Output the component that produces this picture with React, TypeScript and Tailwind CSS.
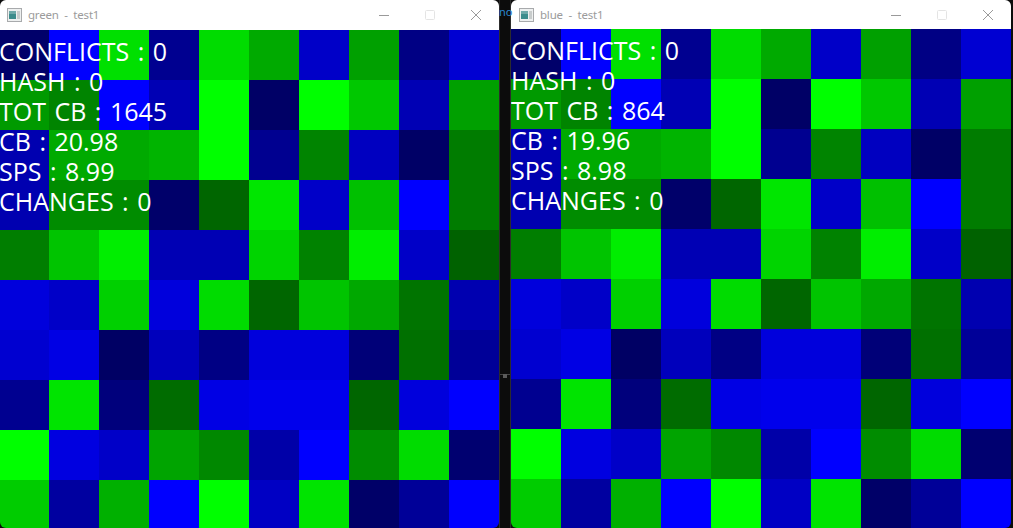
const G = (v: string) => `#00${v}00`;
const B = (v: string) => `#0000${v}`;

const cells = [
  [B('6a'), B('ff'), G('e0'), B('90'), G('dc'), G('aa'), B('c8'), G('a0'), B('84'), B('d2')],
  [G('9a'), G('84'), B('ff'), B('b4'), G('ff'), B('66'), G('ff'), G('c8'), B('b4'), G('a0')],
  [B('b0'), G('aa'), G('aa'), G('b4'), G('ff'), B('90'), G('84'), B('c0'), B('66'), G('7c')],
  [B('b0'), G('8c'), G('8c'), B('6a'), G('66'), G('e6'), B('c8'), G('c0'), B('ff'), G('7c')],
  [G('7e'), G('c4'), G('ee'), B('b4'), B('b4'), G('d4'), G('82'), G('ee'), B('c8'), G('62')],
  [B('dc'), B('c8'), G('d0'), B('dc'), G('dc'), G('66'), G('c4'), G('a8'), G('74'), B('b0')],
  [B('d0'), B('e4'), B('64'), B('bc'), B('84'), B('dc'), B('dc'), B('78'), G('70'), B('98')],
  [B('90'), G('e4'), B('7c'), G('6c'), B('e4'), B('ec'), B('ec'), G('66'), B('dc'), B('ff')],
  [G('ff'), B('e0'), B('c8'), G('a4'), G('88'), B('a8'), B('ff'), G('8c'), G('dc'), B('70')],
  [G('cc'), B('a0'), G('b0'), B('ff'), G('ff'), B('c4'), G('e4'), B('68'), B('98'), B('ff')],
];

function AppIcon() {
  return (
    <svg width="15" height="14" viewBox="0 0 15 14" className="shrink-0">
      <rect x="0.5" y="0.5" width="14" height="13" fill="#eef0f0" stroke="#a8aaac" />
      <rect x="2" y="3" width="7" height="8" fill="#3c8c8c" />
      <rect x="2" y="3" width="7" height="3" fill="#6fa9a9" />
      <rect x="10" y="3" width="3" height="8" fill="#c8cccc" />
    </svg>
  );
}

function TitleBar({ title, className, ctrl }: { title: string; className: string; ctrl: string }) {
  return (
    <div className={className}>
      <div className="flex items-center gap-[6px] text-[11.5px] tracking-[-0.2px] text-[#9b9b9b]">
        <AppIcon />
        <span className="whitespace-pre">{title}</span>
      </div>
      <div className={ctrl}>
        <svg width="10" height="10" viewBox="0 0 10 10">
          <path d="M0 5.5h10" stroke="#9a9a9a" fill="none" />
        </svg>
        <svg width="10" height="10" viewBox="0 0 10 10">
          <rect x="0.5" y="0.5" width="9" height="9" rx="1" stroke="#e4e4e4" fill="none" />
        </svg>
        <svg width="10" height="10" viewBox="0 0 10 10">
          <path d="M0 0l10 10M10 0l-10 10" stroke="#9a9a9a" fill="none" />
        </svg>
      </div>
    </div>
  );
}

function Board({ stats, className }: { stats: string[]; className: string }) {
  return (
    <div className={className}>
      <div className="grid grid-cols-[repeat(10,50px)] auto-rows-[50px] w-[500px]">
        {cells.flat().map((c, i) => (
          <div key={i} style={{ backgroundColor: c }} />
        ))}
      </div>
      <div className="absolute left-0 top-[6px] text-[25px] [word-spacing:2px] text-white font-['Open_Sans',sans-serif]">
        {stats.map((s) => (
          <div key={s} className="h-[30px] leading-[30px] whitespace-pre">
            {s}
          </div>
        ))}
      </div>
    </div>
  );
}

export default function App() {
  return (
    <div className="w-[1013px] h-[528px] overflow-hidden bg-[#0c0c0c] flex font-['Noto_Sans',sans-serif]">
      <div className="w-[499px] shrink-0 rounded-[6px] overflow-hidden flex flex-col">
        <TitleBar
          title="green  -  test1"
          className="h-[30px] pl-[7px] pr-[18px] bg-white shrink-0 flex items-center justify-between"
          ctrl="flex items-center gap-[36px]"
        />
        <Board
          className="relative h-[498px] -ml-px overflow-hidden"
          stats={['CONFLICTS : 0', 'HASH : 0', 'TOT CB : 1645', 'CB : 20.98', 'SPS : 8.99', 'CHANGES : 0']}
        />
      </div>
      <div className="w-[12px] shrink-0 relative border-x border-[#2c2c2c]">
        <div className="absolute -left-px top-[5px] text-[11px] leading-[14px] text-[#2a86d0]">no</div>
        <div className="absolute left-0 right-0 top-[374px] h-px bg-[#444444]" />
        <div className="absolute left-[3px] top-[374px] w-[4px] h-[4px] bg-[#5a5a5a]" />
      </div>
      <div className="w-[500px] shrink-0 rounded-[6px] overflow-hidden flex flex-col">
        <TitleBar
          title="blue  -  test1"
          className="h-[29px] pl-[8px] pr-[18px] bg-white shrink-0 flex items-center justify-between"
          ctrl="flex items-center gap-[36px]"
        />
        <Board
          className="relative h-[499px] overflow-hidden"
          stats={['CONFLICTS : 0', 'HASH : 0', 'TOT CB : 864', 'CB : 19.96', 'SPS : 8.98', 'CHANGES : 0']}
        />
      </div>
    </div>
  );
}
